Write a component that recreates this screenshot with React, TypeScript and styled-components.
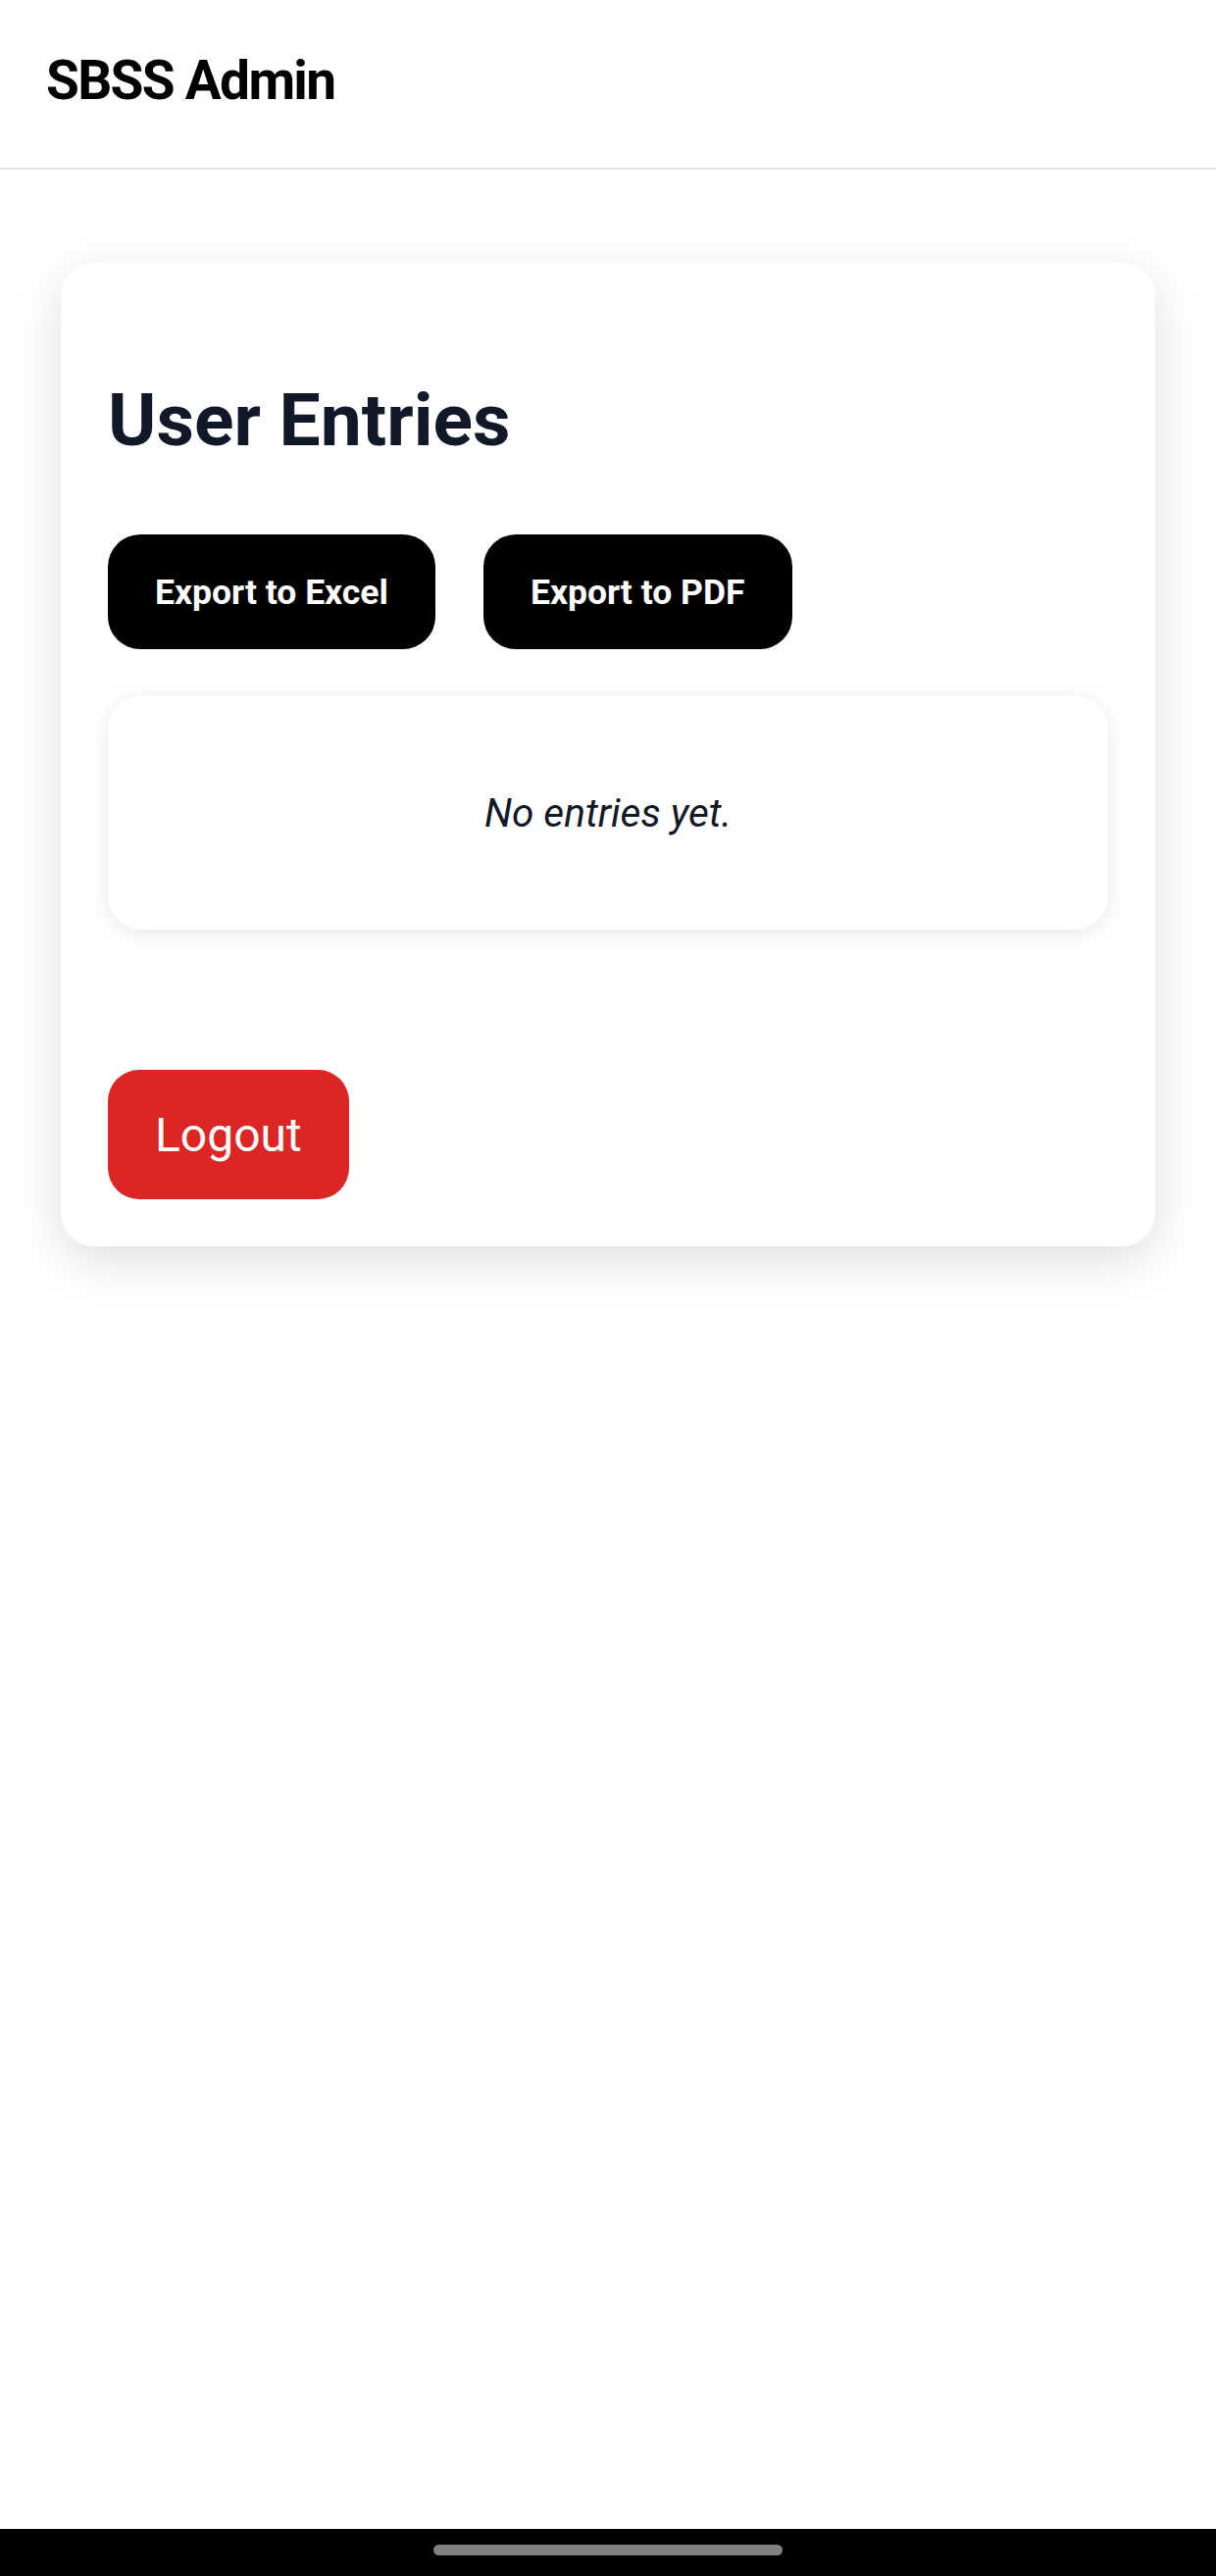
import React from "react";
import styled, { createGlobalStyle } from "styled-components";

const GlobalStyle = createGlobalStyle`
  html, body {
    margin: 0;
    padding: 0;
    background: #ffffff;
    font-family: Roboto, "Noto Sans", "Liberation Sans", sans-serif;
  }
  * { box-sizing: border-box; }
`;

const Page = styled.div`
  min-height: 100vh;
  display: flex;
  flex-direction: column;
  background: #ffffff;
`;

const Header = styled.header`
  height: 173px;
  padding: 50px 47px 0;
  border-bottom: 2px solid #e6e6e6;
`;

const Brand = styled.h1`
  margin: 0;
  font-size: 55px;
  font-weight: 700;
  letter-spacing: -1.7px;
  line-height: normal;
  color: #000000;
`;

const Main = styled.main`
  flex: 1;
  padding: 95px 62px 0;
`;

const Card = styled.section`
  background: #ffffff;
  border-radius: 34px;
  padding: 48px;
  box-shadow: 0 14px 50px rgba(0, 0, 0, 0.13);
  display: flex;
  flex-direction: column;
  align-items: flex-start;
`;

const Title = styled.h2`
  margin: 67px 0 0;
  font-size: 75px;
  font-weight: 700;
  line-height: 1.2;
  color: #111827;
`;

const ButtonRow = styled.div`
  display: flex;
  gap: 49px;
  margin-top: 72px;
`;

const ExportButton = styled.button`
  height: 117px;
  padding: 0 48px;
  border: none;
  border-radius: 33px;
  background: #000000;
  color: #ffffff;
  font-family: inherit;
  font-size: 35.5px;
  font-weight: 700;
  cursor: pointer;
`;

const EmptyBox = styled.div`
  align-self: stretch;
  margin-top: 48px;
  height: 238px;
  border-radius: 34px;
  background: #ffffff;
  box-shadow: 0 4px 22px rgba(0, 0, 0, 0.09);
  display: flex;
  align-items: center;
  justify-content: center;
`;

const EmptyText = styled.p`
  margin: 0;
  font-size: 40.5px;
  font-style: italic;
  color: #111827;
`;

const LogoutButton = styled.button`
  margin-top: 143px;
  height: 132px;
  padding: 0 48px;
  border: none;
  border-radius: 32px;
  background: #dc2626;
  color: #ffffff;
  font-family: inherit;
  font-size: 48px;
  font-weight: 400;
  cursor: pointer;
`;

const NavBar = styled.div`
  height: 48px;
  background: #000000;
  display: flex;
  justify-content: center;
  padding-top: 16px;
`;

const NavHandle = styled.div`
  width: 356px;
  height: 11px;
  border-radius: 6px;
  background: #808080;
`;

export default function App() {
  return (
    <>
      <GlobalStyle />
      <Page>
        <Header>
          <Brand>SBSS Admin</Brand>
        </Header>
        <Main>
          <Card>
            <Title>User Entries</Title>
            <ButtonRow>
              <ExportButton>Export to Excel</ExportButton>
              <ExportButton>Export to PDF</ExportButton>
            </ButtonRow>
            <EmptyBox>
              <EmptyText>No entries yet.</EmptyText>
            </EmptyBox>
            <LogoutButton>Logout</LogoutButton>
          </Card>
        </Main>
        <NavBar>
          <NavHandle />
        </NavBar>
      </Page>
    </>
  );
}
